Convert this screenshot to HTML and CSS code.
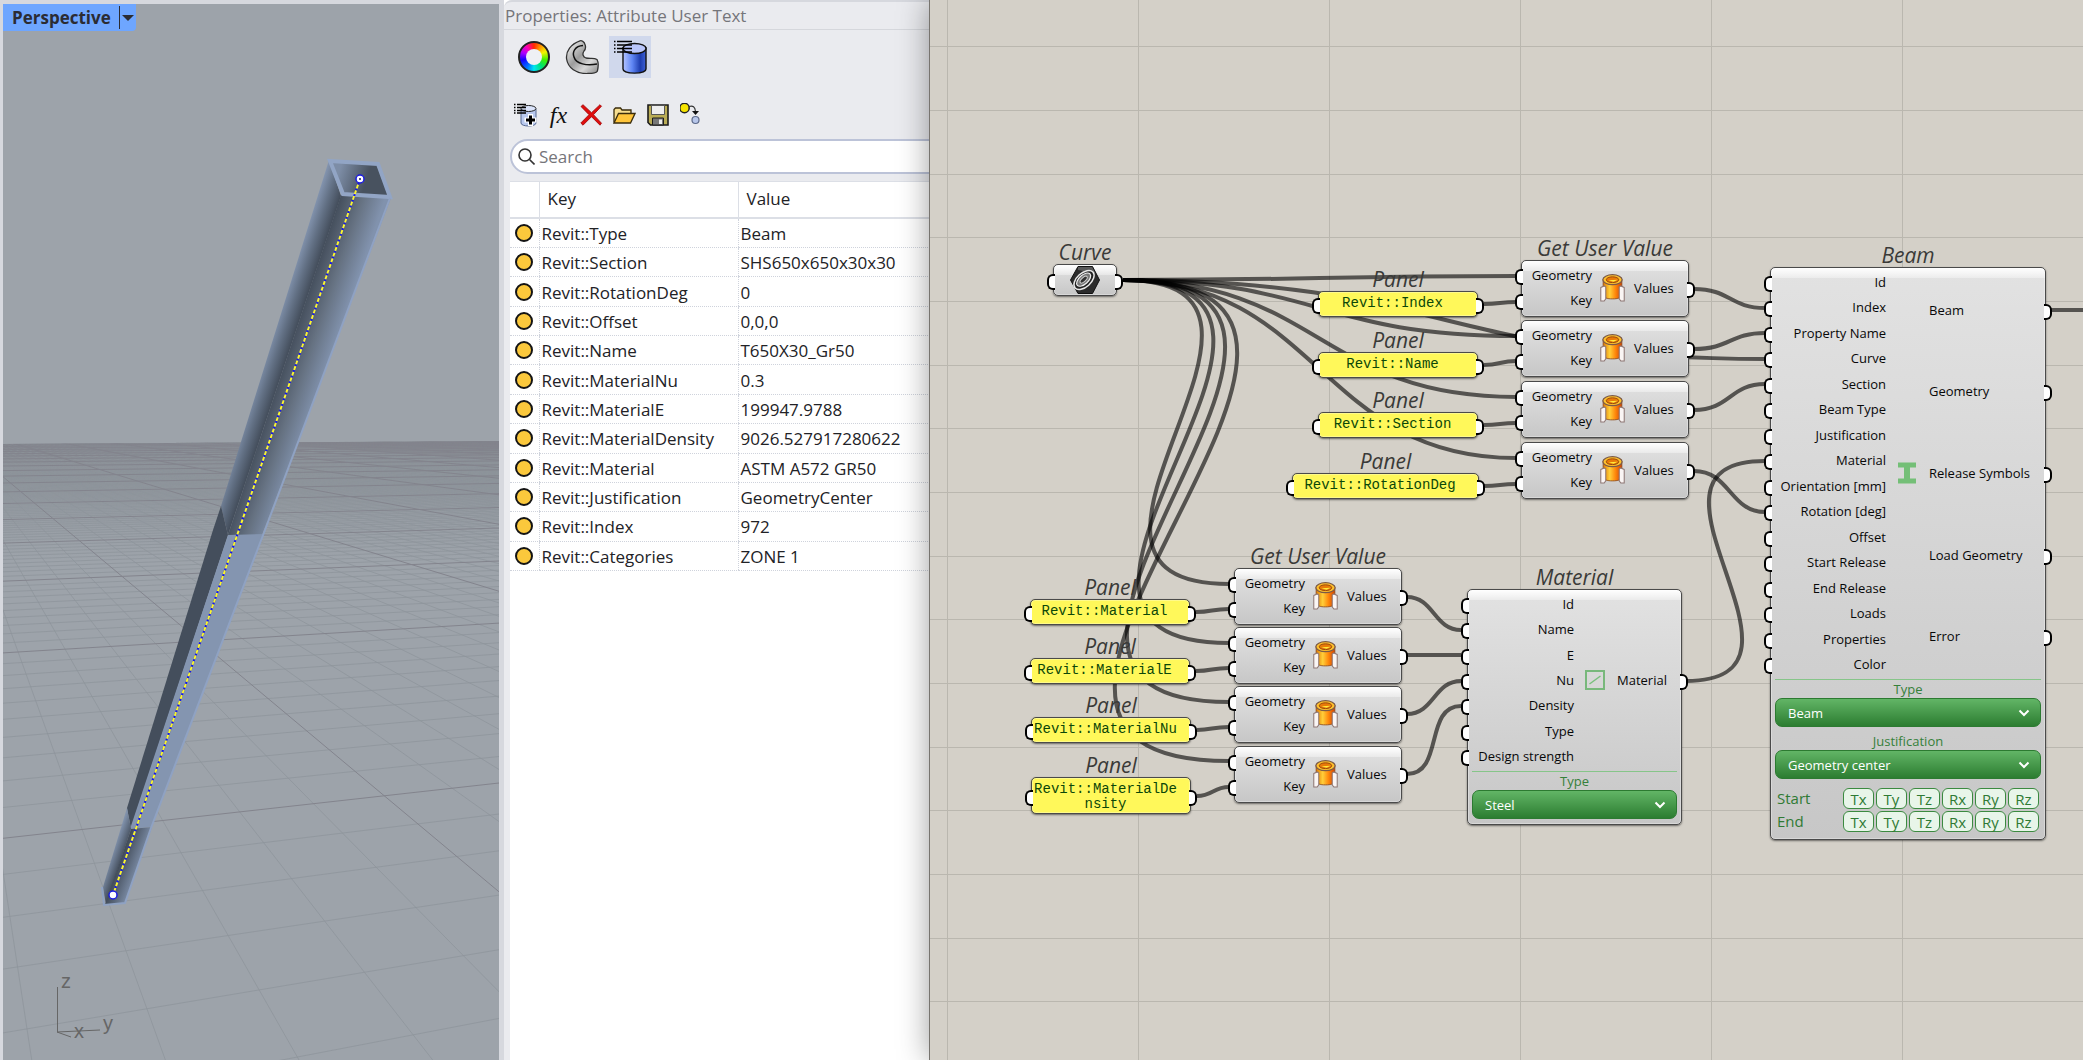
FILE: index.html
```html
<!DOCTYPE html>
<html lang="en">
<head>
<meta charset="utf-8">
<title>Beam definition</title>
<link rel="stylesheet" href="styles.css">
</head>
<body>
<svg class="symbols" aria-hidden="true">
  <symbol id="user-value" viewBox="0 0 24 27">
    <path d="M3 5v15c0 3 4 4 9 4s9-1 9-4V5z" fill="url(#orange)" stroke="#8a4a1c" stroke-width=".8"/>
    <ellipse cx="12" cy="5.500" rx="9.300" ry="4.800" fill="#ffc02c" stroke="#7a5a48" stroke-width="1.200"/>
    <ellipse cx="12" cy="5.500" rx="6" ry="2.800" fill="#e87a08" stroke="#8a3a08" stroke-width=".8"/>
    <path d="M8 6l5 1.500 4-2z" fill="#ffe93a"/>
    <path d="M.7 13l3.300-1.500 1.500 1v11.500l-1.500 2H.7z" fill="#faf5f4" stroke="#8d7774" stroke-width="1"/>
    <path d="M23.300 13l-3.300-1.500-1.500 1v11.500l1.500 2h3.300z" fill="#faf5f4" stroke="#8d7774" stroke-width="1"/>
  </symbol>
  <defs>
    <linearGradient id="orange"><stop offset="0" stop-color="#e07800"/><stop offset=".35" stop-color="#ffcf3a"/><stop offset=".65" stop-color="#ff8a0c"/><stop offset="1" stop-color="#d04000"/></linearGradient>
  </defs>
</svg>
<main class="app">
  <section class="viewport">
    <svg class="scene" viewBox="3 4 496 1056" preserveAspectRatio="xMinYMin slice" role="img" aria-label="Beam in perspective">
      <defs>
        <linearGradient id="haze" gradientUnits="userSpaceOnUse" x1="0" y1="441" x2="0" y2="560"><stop offset="0" stop-color="#82868d"/><stop offset=".2" stop-color="#8d9299"/><stop offset=".55" stop-color="#969ca3"/><stop offset="1" stop-color="#9da3aa"/></linearGradient>
        <linearGradient id="faceL" gradientUnits="userSpaceOnUse" x1="319" y1="190" x2="340" y2="197"><stop offset="0" stop-color="#8495b0"/><stop offset=".5" stop-color="#627084"/><stop offset="1" stop-color="#444e5c"/></linearGradient>
        <linearGradient id="faceR" gradientUnits="userSpaceOnUse" x1="340" y1="197" x2="381" y2="211"><stop offset="0" stop-color="#444e5c"/><stop offset=".5" stop-color="#667282"/><stop offset="1" stop-color="#8192ad"/></linearGradient>
        <linearGradient id="footL" gradientUnits="userSpaceOnUse" x1="110" y1="858" x2="121" y2="862"><stop offset="0" stop-color="#8091ab"/><stop offset="1" stop-color="#444e5c"/></linearGradient>
        <linearGradient id="footR" gradientUnits="userSpaceOnUse" x1="121" y1="862" x2="140" y2="869"><stop offset="0" stop-color="#444e5c"/><stop offset="1" stop-color="#8091ab"/></linearGradient>
        <linearGradient id="mouth" gradientUnits="userSpaceOnUse" x1="338" y1="175" x2="372" y2="186"><stop offset="0" stop-color="#7d8da6"/><stop offset=".8" stop-color="#48525f"/></linearGradient>
        <clipPath id="ground"><path d="M3 444L499 441V1060H3z"/></clipPath>
      </defs>
      <path d="M3 444L499 441V1060H3z" fill="url(#haze)"/>
      <g clip-path="url(#ground)" fill="none">
        <path id="minor-lines" stroke="#8d949b" stroke-opacity=".75"/>
        <path id="major-lines" stroke="#83848d"/>
      </g>
      <path d="M329 160L221 506L228 535L341 196z" fill="url(#faceL)"/>
      <path d="M341 195L228 535L262 535L391 198z" fill="url(#faceR)"/>
      <path d="M221 506L228 535L131 829L127 808L213 530z" fill="#444e5c"/>
      <path d="M228 535L264 534L151 827L130 829z" fill="#8495b0"/>
      <path d="M127 808L131 829L106 905L103 887z" fill="url(#footL)"/>
      <path d="M131 829L152 827L125 903L105 905z" fill="url(#footR)"/>
      <path d="M329 160L378 163L391 198L342 195z" fill="url(#mouth)"/>
      <path d="M330 161L378 164L390 197L343 194z" fill="none" stroke="#92a5c5" stroke-width="4"/>
      <path d="M390 198L265 530L151 828L125 903L104 905L102 887" fill="none" stroke="#8fa2c3" stroke-width="2"/>
      <path d="M360 179L113 895" stroke="#1518e8" stroke-width="2"/>
      <path d="M360 179L113 895" stroke="#fbf72c" stroke-width="2" stroke-dasharray="4 2"/>
      <g fill="#fff" stroke="#1a1ae0" stroke-width="1.500"><circle cx="360" cy="179" r="4"/><circle cx="113" cy="895" r="4"/></g>
      <circle cx="360" cy="179" r="1" fill="#1a1a60"/>
      <path d="M57.500 987V1032M57 1032L100 1030M57 1032L71 1037" stroke="#666" fill="none"/>
      <g class="axis"><text x="61" y="988">z</text><text x="103" y="1030">y</text><text x="74" y="1038">x</text></g>
    </svg>
    <button class="view-name" type="button"><span>Perspective</span><i></i></button>
  </section>

  <section class="props">
    <h1>Properties: Attribute User Text</h1>
    <div class="tabs">
      <button type="button" aria-label="Object color"><span class="wheel"></span></button>
      <button type="button" aria-label="Geometry"><svg width="34" height="34" viewBox="0 0 34 34"><defs><linearGradient id="tube" x1="0" y1="0" x2="1" y2="1"><stop offset="0" stop-color="#fff"/><stop offset=".45" stop-color="#9c9c9c"/><stop offset=".7" stop-color="#d8d8d8"/><stop offset="1" stop-color="#8a8a8a"/></linearGradient></defs><path d="M15 .8C6 4 .6 11 1.600 19C3 28 11 34 23 33.500C28 33.500 32.500 33 32.500 30.500C33.500 26 33.500 22 32 19.500C29 17.500 25 19 21 18C18 17 17 14 19 11C22 8 20 2.500 17.500 1.200C16.500.5 16 .5 15 .8z" fill="url(#tube)" stroke="#333" stroke-width="1.300"/><path d="M18 5.500C10 6 7 12 9 17C11 24 22 26 32 24" fill="none" stroke="#111" stroke-width="1.500"/></svg></button>
      <button type="button" class="on" aria-label="Attribute user text"><svg width="34" height="34" viewBox="0 0 34 34"><defs><linearGradient id="blue"><stop offset="0" stop-color="#b4c4ff"/><stop offset=".4" stop-color="#5f86f4"/><stop offset=".75" stop-color="#1d3cae"/><stop offset="1" stop-color="#3e62d8"/></linearGradient></defs><path d="M10 8v21c0 5.500 23 5.500 23 0V8z" fill="url(#blue)" stroke="#111" stroke-width="1.400"/><ellipse cx="21.500" cy="8.500" rx="11.500" ry="5" fill="#b9c6fb" stroke="#111" stroke-width="1.400"/><path d="M1 1.500h1.500M1 5h1.500M1 8.500h1.500M1 12h1.500M4 1.500h15M4 5h15M4 8.500h15M4 12h15" stroke="#000" stroke-width="1.600"/></svg></button>
    </div>
    <div class="tools">
      <button type="button" aria-label="Add"><svg width="23" height="24" viewBox="0 0 23 24"><path d="M7 6v14c0 4 15 4 15 0V6z" fill="#b8c8ee" stroke="#56688f"/><ellipse cx="14.500" cy="5.500" rx="7.500" ry="3" fill="#dbe4fb" stroke="#222"/><path d="M0 1.500h1.500M0 4.500h1.500M0 7.500h1.500M0 10h1.500M3 1.500h9M3 4.500h9M3 7.500h9M3 10h9" stroke="#000" stroke-width="1.300"/><path d="M16.500 11v12M10.500 17h12" stroke="#fff" stroke-width="5"/><path d="M16.500 12.500v9M12 17h9" stroke="#000" stroke-width="3"/></svg></button>
      <button type="button" class="fx" aria-label="Function">fx</button>
      <button type="button" aria-label="Delete"><svg width="23" height="22" viewBox="0 0 23 22"><path d="M3 .7l8.500 8L20 .7l1.500 1.500-8 8.500 8 8.500-1.500 2-8.500-8.500L3 21.200.8 19l8.200-8.300L1 2.500z" fill="#e00d0d" stroke="#9c0505" stroke-width=".8"/></svg></button>
      <button type="button" aria-label="Open"><svg width="23" height="18" viewBox="0 0 23 18"><path d="M1 16.500V3.500L2.500 2h5L9 4h9v4" fill="#f7de90" stroke="#3a2c0c" stroke-width="1.300"/><path d="M1 17L5.500 7.500H22L17.500 17z" fill="#ffc53b" stroke="#3a2c0c" stroke-width="1.300"/></svg></button>
      <button type="button" aria-label="Save"><svg width="22" height="22" viewBox="0 0 22 22"><path d="M1 1h20v20H3.500L1 18.500z" fill="#b9ac55" stroke="#1c1c1c" stroke-width="1.600"/><path d="M4.500 1.500h13v9h-13z" fill="#eee" stroke="#555"/><path d="M5.500 14h11v7h-11z" fill="#777" stroke="#1c1c1c"/><path d="M12 15.500h3V20h-3z" fill="#eee"/></svg></button>
      <button type="button" aria-label="Match"><svg width="22" height="24" viewBox="2 1 22 24"><circle cx="6.500" cy="6" r="4.700" fill="#f6e400" stroke="#222" stroke-width="1.500"/><path d="M11 4.500c4-1 6 0 6.500 5" fill="none" stroke="#333" stroke-width="1.200"/><path d="M14 9h7l-3.500 4z" fill="#111"/><circle cx="17.500" cy="18" r="3.500" fill="#b7c6ea" stroke="#5c6a8a" stroke-width="1.200"/></svg></button>
    </div>
    <label class="search"><svg width="17" height="17" viewBox="0 0 17 17"><circle cx="7" cy="7" r="6" fill="none" stroke="#333" stroke-width="1.600"/><path d="M11.500 11.500L16.500 16.500" stroke="#333" stroke-width="1.600"/></svg><input type="text" placeholder="Search" aria-label="Search"></label>
    <table>
      <thead><tr><th aria-label="State"></th><th>Key</th><th>Value</th></tr></thead>
      <tbody>
        <tr><td><i></i></td><td>Revit::Type</td><td>Beam</td></tr>
        <tr><td><i></i></td><td>Revit::Section</td><td>SHS650x650x30x30</td></tr>
        <tr><td><i></i></td><td>Revit::RotationDeg</td><td>0</td></tr>
        <tr><td><i></i></td><td>Revit::Offset</td><td>0,0,0</td></tr>
        <tr><td><i></i></td><td>Revit::Name</td><td>T650X30_Gr50</td></tr>
        <tr><td><i></i></td><td>Revit::MaterialNu</td><td>0.3</td></tr>
        <tr><td><i></i></td><td>Revit::MaterialE</td><td>199947.9788</td></tr>
        <tr><td><i></i></td><td>Revit::MaterialDensity</td><td>9026.527917280622</td></tr>
        <tr><td><i></i></td><td>Revit::Material</td><td>ASTM A572 GR50</td></tr>
        <tr><td><i></i></td><td>Revit::Justification</td><td>GeometryCenter</td></tr>
        <tr><td><i></i></td><td>Revit::Index</td><td>972</td></tr>
        <tr><td><i></i></td><td>Revit::Categories</td><td>ZONE 1</td></tr>
      </tbody>
    </table>
    <div class="rest"></div>
  </section>

  <section class="canvas">
    <svg class="wires" aria-hidden="true"><g transform="translate(-930 0)">
      <path d="M1123 280C1319 280 1320 276 1516 276"/>
      <path d="M1123 280C1319 280 1320 336 1516 336"/>
      <path d="M1123 280C1443 280 1444 359 1765 359"/>
      <path d="M1123 280C1319 280 1320 397 1516 397"/>
      <path d="M1123 280C1319 280 1320 458 1516 458"/>
      <path d="M1123 280C1343 280 1009 584 1229 584"/>
      <path d="M1123 280C1385 280 967 643 1229 643"/>
      <path d="M1123 280C1427 280 925 702 1229 702"/>
      <path d="M1123 280C1470 280 882 761 1229 761"/>
      <path d="M1484 304C1500 304 1500 302 1516 302"/>
      <path d="M1484 365C1500 365 1500 361 1516 361"/>
      <path d="M1484 425C1500 425 1500 423 1516 423"/>
      <path d="M1484 486C1500 486 1500 484 1516 484"/>
      <path d="M1196 612C1212 612 1212 609 1229 609"/>
      <path d="M1196 671C1212 671 1212 668 1229 668"/>
      <path d="M1197 730C1212 730 1212 727 1229 727"/>
      <path d="M1197 796C1213 796 1213 787 1229 787"/>
      <path d="M1694 289C1730 289 1730 308 1765 308"/>
      <path d="M1694 349C1730 349 1730 333 1765 333"/>
      <path d="M1694 410C1730 410 1730 384 1765 384"/>
      <path d="M1694 471C1730 471 1730 512 1765 512"/>
      <path d="M1407 597C1434 597 1434 630 1461 630"/>
      <path d="M1407 655H1461"/>
      <path d="M1407 714C1434 714 1434 681 1461 681"/>
      <path d="M1407 774C1444 774 1424 706 1461 706"/>
      <path d="M1686 681C1840 681 1611 461 1765 461"/>
      <path d="M2051 310H3200"/>
    </g></svg>

    <article class="node curve"><h2>Curve</h2>
      <svg width="30" height="28" viewBox="0 0 30 28"><path d="M8 .5h14.500L29.500 14 22.500 27.500H8L.5 14z" fill="#2b2b2b" stroke="#111"/><path d="M8 1h14l3.500 6.500L8 4z" fill="#888" opacity=".5"/><g fill="none" transform="rotate(-42 14 14)"><ellipse cx="14" cy="14" rx="12" ry="7" fill="#222" stroke="#e8e8e8" stroke-width="1.500"/><ellipse cx="14" cy="13.500" rx="8.500" ry="4.500" fill="#777" stroke="#eee" stroke-width="1.200"/><ellipse cx="14" cy="13.500" rx="4.500" ry="2" fill="#333" stroke="#ccc"/></g></svg>
    </article>

    <article class="node panel p-index"><h2>Panel</h2><p>Revit::Index</p></article>
    <article class="node panel p-name"><h2>Panel</h2><p>Revit::Name</p></article>
    <article class="node panel p-section"><h2>Panel</h2><p>Revit::Section</p></article>
    <article class="node panel p-rotation"><h2>Panel</h2><p>Revit::RotationDeg</p></article>
    <article class="node panel p-material"><h2>Panel</h2><p>Revit::Material</p></article>
    <article class="node panel p-e"><h2>Panel</h2><p>Revit::MaterialE</p></article>
    <article class="node panel p-nu"><h2>Panel</h2><p>Revit::MaterialNu</p></article>
    <article class="node panel p-density"><h2>Panel</h2><p>Revit::MaterialDensity</p></article>

    <article class="node value v1"><h2>Get User Value</h2><div class="io"><ul class="in"><li>Geometry</li><li>Key</li></ul><svg width="25" height="28"><use href="#user-value"/></svg><ul class="out"><li>Values</li></ul></div></article>
    <article class="node value v2"><div class="io"><ul class="in"><li>Geometry</li><li>Key</li></ul><svg width="25" height="28"><use href="#user-value"/></svg><ul class="out"><li>Values</li></ul></div></article>
    <article class="node value v3"><div class="io"><ul class="in"><li>Geometry</li><li>Key</li></ul><svg width="25" height="28"><use href="#user-value"/></svg><ul class="out"><li>Values</li></ul></div></article>
    <article class="node value v4"><div class="io"><ul class="in"><li>Geometry</li><li>Key</li></ul><svg width="25" height="28"><use href="#user-value"/></svg><ul class="out"><li>Values</li></ul></div></article>
    <article class="node value v5"><h2>Get User Value</h2><div class="io"><ul class="in"><li>Geometry</li><li>Key</li></ul><svg width="25" height="28"><use href="#user-value"/></svg><ul class="out"><li>Values</li></ul></div></article>
    <article class="node value v6"><div class="io"><ul class="in"><li>Geometry</li><li>Key</li></ul><svg width="25" height="28"><use href="#user-value"/></svg><ul class="out"><li>Values</li></ul></div></article>
    <article class="node value v7"><div class="io"><ul class="in"><li>Geometry</li><li>Key</li></ul><svg width="25" height="28"><use href="#user-value"/></svg><ul class="out"><li>Values</li></ul></div></article>
    <article class="node value v8"><div class="io"><ul class="in"><li>Geometry</li><li>Key</li></ul><svg width="25" height="28"><use href="#user-value"/></svg><ul class="out"><li>Values</li></ul></div></article>

    <article class="node material"><h2>Material</h2>
      <div class="io"><ul class="in"><li>Id</li><li>Name</li><li>E</li><li>Nu</li><li>Density</li><li>Type</li><li>Design strength</li></ul>
        <svg width="20" height="20" viewBox="0 0 20 20"><path d="M1 1h18v18H1z" fill="none" stroke="#78b87b" stroke-width="2"/><path d="M4.500 14L15.500 6" stroke="#78c07b" stroke-width="1.500"/></svg>
        <ul class="out"><li>Material</li></ul></div>
      <div class="options"><label for="mat-type">Type</label><select id="mat-type"><option>Steel</option></select></div>
    </article>

    <article class="node beam"><h2>Beam</h2>
      <div class="io"><ul class="in"><li>Id</li><li>Index</li><li>Property Name</li><li>Curve</li><li>Section</li><li>Beam Type</li><li>Justification</li><li>Material</li><li>Orientation [mm]</li><li>Rotation [deg]</li><li>Offset</li><li>Start Release</li><li>End Release</li><li>Loads</li><li>Properties</li><li>Color</li></ul>
        <svg width="18" height="22" viewBox="0 0 18 22"><path d="M0 .5h18v5h-6v11h6v5H0v-5h6v-11H0z" fill="#74bf77"/></svg>
        <ul class="out"><li>Beam</li><li>Geometry</li><li>Release Symbols</li><li>Load Geometry</li><li>Error</li></ul></div>
      <div class="options"><label for="beam-type">Type</label><select id="beam-type"><option>Beam</option></select>
        <label class="second" for="beam-just">Justification</label><select id="beam-just"><option>Geometry center</option></select></div>
      <div class="fixity">
        <div><span>Start</span><button type="button">Tx</button><button type="button">Ty</button><button type="button">Tz</button><button type="button">Rx</button><button type="button">Ry</button><button type="button">Rz</button></div>
        <div><span>End</span><button type="button">Tx</button><button type="button">Ty</button><button type="button">Tz</button><button type="button">Rx</button><button type="button">Ry</button><button type="button">Rz</button></div>
      </div>
    </article>
  </section>
</main>
<script src="grid.js"></script>
</body>
</html>
```
FILE: grid.js
```js
// Projects the construction plane: every tenth line is a major one.
const minor = [];
const major = [];

// Lines across the view, nearest first.
for (let k = -8; k <= 200; k++) {
  const left = 419 + 1 / (0.002385 + k * 0.000189);
  const right = 420 + 1 / (0.002755 + k * 0.0002168);
  const line = `M3 ${left.toFixed(1)}L499 ${right.toFixed(1)}`;
  if (k % 10 === 0) major.push(line);
  else if (k < 90) minor.push(line);
}

// Lines running away to the left vanishing point.
for (let k = -5; k <= 120; k++) {
  const x = -66 + 1200 * (1.195 + k * 0.2085);
  const line = `M-66 419L${x.toFixed(1)} 1619`;
  if (k % 10 === 0) major.push(line);
  else if (k < 60) minor.push(line);
}

document.getElementById('minor-lines').setAttribute('d', minor.join(''));
document.getElementById('major-lines').setAttribute('d', major.join(''));
```
FILE: styles.css
```css
* { box-sizing: border-box; }
body { margin: 0; font-family: "Open Sans", "Noto Sans", sans-serif; color: #222226; }
h1, h2, p, ul { margin: 0; padding: 0; font-weight: 400; list-style: none; }
button { font: inherit; color: inherit; border: 0; padding: 0; background: none; }
.symbols { position: absolute; width: 0; height: 0; }
.app { display: flex; min-height: 100vh; overflow: hidden; }

/* 3D view */
.viewport { position: relative; flex: 0 0 504px; padding: 4px 5px 0 3px; background: #d6d8de; }
.scene { display: block; width: 100%; height: 100%; background: #9da3aa; }
.axis { font: 20px "Liberation Sans", sans-serif; fill: #666; }
.view-name { position: absolute; top: 4px; left: 3px; display: flex; align-items: center; height: 27px; width: 133px; padding-left: 9px; border-radius: 0 0 4px 0; background: #6ea6ff; color: #2b2c33; font-size: 17px; font-weight: 700; }
.view-name span { flex: 1; text-align: left; }
.view-name i { display: flex; align-items: center; justify-content: center; width: 17px; height: 23px; border-left: 1px solid #2b2c33; }
.view-name i::after { content: ""; border: 6px solid transparent; border-top-color: #2b2c33; border-bottom: 0; }

/* properties */
.props { flex: 0 0 426px; display: flex; flex-direction: column; padding: 2px 0 0 6px; background: #eaebef; border-top: 2px solid #d6d8de; border-top-left-radius: 8px; }
h1 { height: 26px; margin-left: -6px; padding-left: 1px; font-size: 17px; line-height: 24px; color: #75757a; border-bottom: 1px solid #d5d7dc; }
.tabs { display: flex; gap: 6px; height: 42px; margin: 6px 0 0 3px; }
.tabs button { display: flex; align-items: center; justify-content: center; width: 42px; height: 42px; }
.tabs .on { background: #d0d8ec; }
.wheel { position: relative; width: 32px; height: 32px; border: 2px solid #222; border-radius: 50%; background: conic-gradient(#ff2a00 0deg, #ff9d00 35deg, #f4f400 65deg, #3df000 105deg, #00e070 140deg, #00e6f0 180deg, #0070ff 215deg, #1500ff 255deg, #a800ff 290deg, #ff00b4 325deg, #ff2a00 360deg); }
.wheel::after { content: ""; position: absolute; inset: 6px; border-radius: 50%; background: #eef0f4; }
.tools { display: flex; align-items: center; gap: 10px; height: 26px; margin: 24px 0 0 4px; }
.tools button { display: flex; align-items: center; justify-content: center; width: 23px; height: 26px; }
.tools .fx { font: italic 400 24px/26px "Liberation Serif", serif; color: #111; }
.search { display: flex; align-items: center; height: 35px; margin: 11px -20px 0 0; padding-left: 6px; gap: 4px; border: 2px solid #bcc3d8; border-radius: 18px; background: #fff; }
.search input { flex: 1; border: 0; outline: 0; background: none; padding: 0; font: inherit; font-size: 17px; }
.search input::placeholder { color: #75757a; opacity: 1; }
table { width: 100%; height: 390px; margin-top: 7px; table-layout: fixed; border-collapse: collapse; background: #fff; font-size: 17px; line-height: 20px; }
th, td { padding: 0 0 0 2px; text-align: left; font-weight: 400; }
th { height: 36px; padding-left: 8px; border-top: 1px solid #dcdfe6; border-bottom: 2px solid #dcdfe6; }
th:nth-child(1) { width: 29px; }
th:nth-child(2) { width: 199px; }
th + th { border-left: 1px solid #dcdfe6; }
td { border-bottom: 1px dotted #cfd3dc; }
td + td { border-left: 1px dotted #cfd3dc; padding-top: 2px; }
td:first-child { padding-left: 5px; }
td i { display: block; width: 18px; height: 18px; border: 2px solid #141414; border-radius: 50%; background: #fbc83c; }
.rest { flex: 1; background: #fff; }

/* node canvas */
.canvas { position: relative; z-index: 1; flex: 1; min-width: 0; background: #d4d0c8; box-shadow: -1px 0 0 #77746f, 0 0 30px rgba(0, 0, 0, .4);
  background-image: linear-gradient(90deg, #bab7af 1px, transparent 1px), linear-gradient(#bab7af 1px, transparent 1px, transparent 64px, #bab7af 64px, #bab7af 65px, transparent 65px, transparent 128px, #bab7af 128px, #bab7af 129px, transparent 129px);
  background-size: 191px 191px; background-position: 17px 46px; }
.wires { position: absolute; left: 0; top: 0; width: 100%; height: 100%; fill: none; stroke: #000; }
.wires path { stroke-opacity: .6; stroke-width: 4; }
.node { position: absolute; border: 1px solid #4a4a4a; border-radius: 5px; color: #080808; font-size: 13px; line-height: 18px;
  background: linear-gradient(#fff, rgba(255, 255, 255, .35)) 0 0 / 100% 10px no-repeat, linear-gradient(#e2e2e2, #c7c7c7); box-shadow: 0 1px 2px rgba(0, 0, 0, .5), inset 0 0 0 1px rgba(255, 255, 255, .3); }
h2 { position: absolute; left: -20px; right: -20px; bottom: calc(100% + 3px); text-align: center; white-space: nowrap; font-size: 21px; line-height: 20px; font-style: italic; color: #3a3a38; }
.io { display: flex; align-items: center; height: 51px; margin-top: 1px; }
.io svg { flex: none; margin: 0 9px 0 8px; overflow: visible; }
.in, .out { display: grid; grid-auto-rows: 1fr; height: 100%; }
.in { flex: none; width: 70px; text-align: right; }
.out { flex: 1; }
li { position: relative; display: flex; align-items: center; white-space: nowrap; }
.in li { justify-content: flex-end; }
.in li::before, .out li::after, .curve::before, .curve::after, .panel::before, .panel::after { content: ""; position: absolute; top: calc(50% - 6px); width: 6px; height: 12px; border: 2px solid #000; background: #fff; }
.in li::before, .curve::before, .panel::before { left: -7px; border-right: 0; border-radius: 6px 0 0 6px; }
.out li::after, .curve::after, .panel::after { right: -7px; border-left: 0; border-radius: 0 6px 6px 0; }
.curve { display: flex; align-items: center; justify-content: center; left: 123px; top: 264px; width: 64px; height: 32px; }
.value { width: 168px; height: 57px; }
.v1 { left: 591px; top: 260px; }
.v2 { left: 591px; top: 320px; }
.v3 { left: 591px; top: 381px; }
.v4 { left: 591px; top: 442px; }
.v5 { left: 304px; top: 568px; }
.v6 { left: 304px; top: 627px; }
.v7 { left: 304px; top: 686px; }
.v8 { left: 304px; top: 746px; }
.panel { width: 160px; min-height: 26px; padding: 4px 13px 1px 2px; background: #fff85a; }
.panel p { font: 14px/15px "Liberation Mono", monospace; color: #0b4708; text-align: center; word-break: break-all; }
.p-index { left: 388px; top: 291px; }
.p-name { left: 388px; top: 352px; }
.p-section { left: 388px; top: 412px; }
.p-rotation { left: 362px; top: 473px; width: 187px; }
.p-material { left: 100px; top: 599px; }
.p-e { left: 100px; top: 658px; }
.p-nu { left: 101px; top: 717px; }
.p-density { left: 101px; top: 777px; }
.material { left: 537px; top: 589px; width: 215px; }
.material .io { height: 178px; }
.material .in { width: 106px; }
.material .io svg { margin: 0 12px 0 11px; }
.beam { left: 840px; top: 267px; width: 276px; }
.beam .io { height: 408px; }
.beam .in { width: 115px; }
.beam .io svg { margin: 0 13px 0 12px; }
.options { display: flex; flex-direction: column; margin: 2px 4px 0; padding-bottom: 5px; border-top: 1px solid #86c589; }
.options label { line-height: 18px; text-align: center; color: #35803a; }
.options .second { margin-top: 5px; }
select { appearance: none; height: 29px; padding: 0 12px; border: 1px solid #2c7a31; border-radius: 7px; color: #fff; font: 13px "Open Sans", "Noto Sans", sans-serif;
  background: url("data:image/svg+xml,%3Csvg xmlns='http://www.w3.org/2000/svg' width='12' height='8'%3E%3Cpath d='M1.500 1.500L6 6l4.500-4.500' fill='none' stroke='white' stroke-width='2'/%3E%3C/svg%3E") right 10px center no-repeat, linear-gradient(#62b566, #2c7d31); }
.fixity { display: grid; gap: 2px; padding: 4px 6px 7px 6px; font-size: 15px; color: #2f7a34; }
.fixity div { display: flex; gap: 2px; }
.fixity span { flex: 1; line-height: 20px; }
.fixity button { width: 31px; height: 21px; border: 1px solid #3b8a40; border-radius: 6px; background: #e8f5e9; line-height: 18px; }
```
